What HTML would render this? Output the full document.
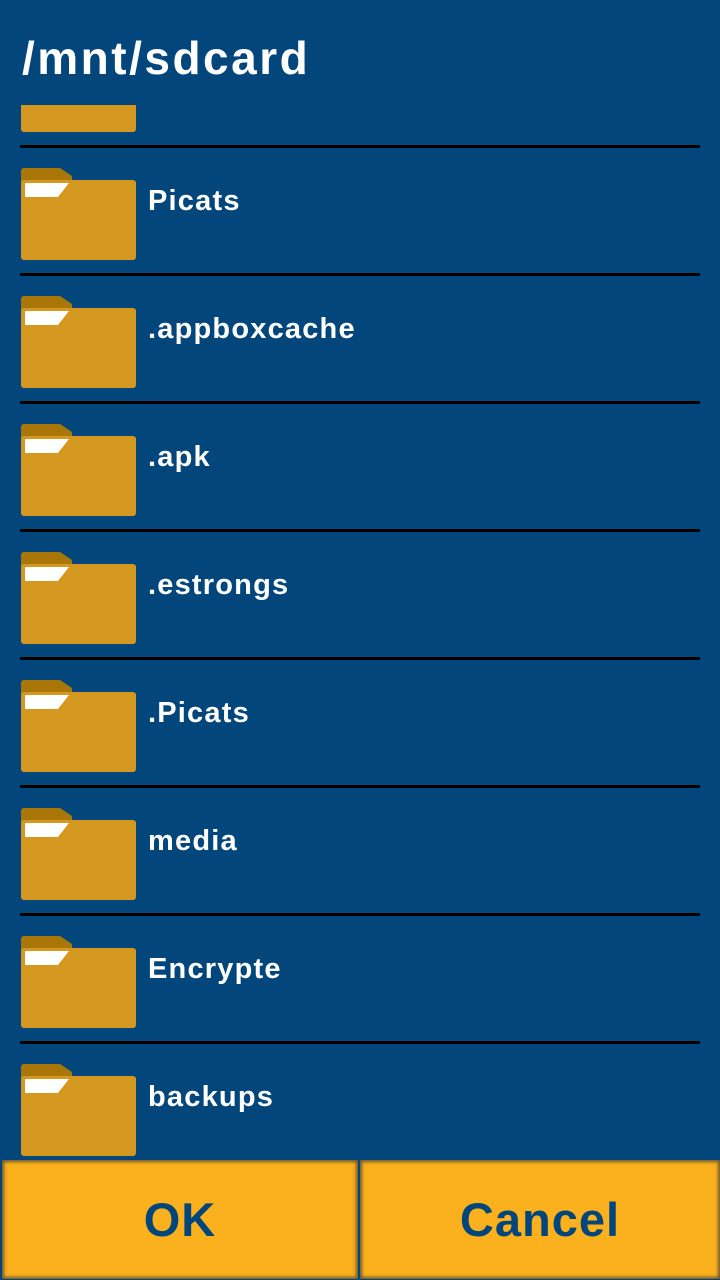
<!DOCTYPE html>
<html><head><meta charset="utf-8"><style>
*{margin:0;padding:0;box-sizing:border-box}
body{width:720px;height:1280px;background:#03467c;position:relative;overflow:hidden;font-family:"Liberation Sans",sans-serif;font-weight:bold}
.t{position:absolute;left:22px;top:31px;color:#fff;font-size:46px;letter-spacing:2.5px}
.sep{position:absolute;left:20px;width:680px;height:3px;background:#000}
.row{position:absolute;left:0;width:720px;height:128px}
.row svg{position:absolute;left:20px;top:20px}
.row span{position:absolute;left:148px;top:37px;color:#fff;font-size:29px;letter-spacing:1.2px}
.btn{position:absolute;top:1160px;height:119px;background:#fbb01d;box-shadow:inset 0 0 3px 2px #6a5a30;color:#03467c;font-size:47px;text-align:center;line-height:119px;letter-spacing:1px}
</style></head><body>
<div class="t">/mnt/sdcard</div>
<div style="position:absolute;left:21px;top:105px;width:115px;height:27px;background:#d49720;border-radius:0 0 3px 3px"></div>
<div class="sep" style="top:145px"></div>
<div class="row" style="top:148px"><svg width="118" height="94"><path d="M3 0H40L52 8V20H1V2Z" fill="#a87707"/><rect x="1" y="12" width="115" height="80" rx="3" fill="#d49720"/><path d="M5 15H49L38 29H5Z" fill="#fff"/></svg><span>Picats</span></div>
<div class="sep" style="top:273px"></div>
<div class="row" style="top:276px"><svg width="118" height="94"><path d="M3 0H40L52 8V20H1V2Z" fill="#a87707"/><rect x="1" y="12" width="115" height="80" rx="3" fill="#d49720"/><path d="M5 15H49L38 29H5Z" fill="#fff"/></svg><span>.appboxcache</span></div>
<div class="sep" style="top:401px"></div>
<div class="row" style="top:404px"><svg width="118" height="94"><path d="M3 0H40L52 8V20H1V2Z" fill="#a87707"/><rect x="1" y="12" width="115" height="80" rx="3" fill="#d49720"/><path d="M5 15H49L38 29H5Z" fill="#fff"/></svg><span>.apk</span></div>
<div class="sep" style="top:529px"></div>
<div class="row" style="top:532px"><svg width="118" height="94"><path d="M3 0H40L52 8V20H1V2Z" fill="#a87707"/><rect x="1" y="12" width="115" height="80" rx="3" fill="#d49720"/><path d="M5 15H49L38 29H5Z" fill="#fff"/></svg><span>.estrongs</span></div>
<div class="sep" style="top:657px"></div>
<div class="row" style="top:660px"><svg width="118" height="94"><path d="M3 0H40L52 8V20H1V2Z" fill="#a87707"/><rect x="1" y="12" width="115" height="80" rx="3" fill="#d49720"/><path d="M5 15H49L38 29H5Z" fill="#fff"/></svg><span>.Picats</span></div>
<div class="sep" style="top:785px"></div>
<div class="row" style="top:788px"><svg width="118" height="94"><path d="M3 0H40L52 8V20H1V2Z" fill="#a87707"/><rect x="1" y="12" width="115" height="80" rx="3" fill="#d49720"/><path d="M5 15H49L38 29H5Z" fill="#fff"/></svg><span>media</span></div>
<div class="sep" style="top:913px"></div>
<div class="row" style="top:916px"><svg width="118" height="94"><path d="M3 0H40L52 8V20H1V2Z" fill="#a87707"/><rect x="1" y="12" width="115" height="80" rx="3" fill="#d49720"/><path d="M5 15H49L38 29H5Z" fill="#fff"/></svg><span>Encrypte</span></div>
<div class="sep" style="top:1041px"></div>
<div class="row" style="top:1044px"><svg width="118" height="94"><path d="M3 0H40L52 8V20H1V2Z" fill="#a87707"/><rect x="1" y="12" width="115" height="80" rx="3" fill="#d49720"/><path d="M5 15H49L38 29H5Z" fill="#fff"/></svg><span>backups</span></div>
<div class="btn" style="left:2px;width:356px">OK</div>
<div class="btn" style="left:360px;width:360px">Cancel</div>
</body></html>
